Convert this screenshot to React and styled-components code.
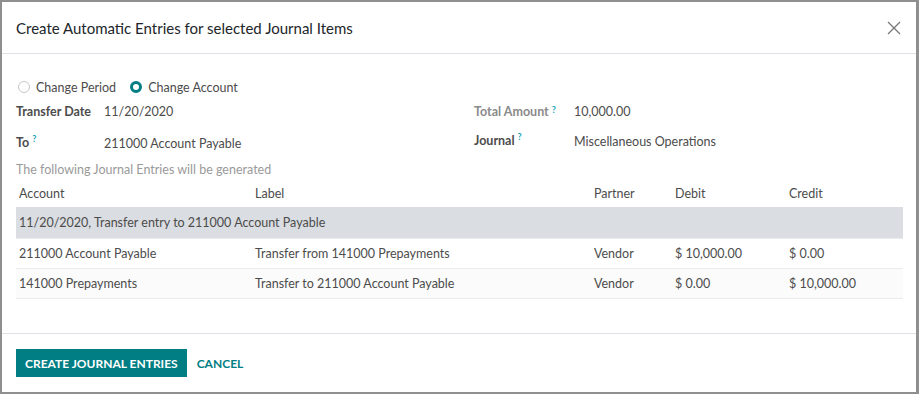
import React from 'react';
import styled, { createGlobalStyle } from 'styled-components';

const Global = createGlobalStyle`
  html, body {
    margin: 0;
    padding: 0;
    background: #fff;
  }
  body {
    font-family: Lato, "Noto Sans", sans-serif;
    font-size: 12.5px;
    color: #4c4c4c;
  }
`;

const Dialog = styled.div`
  box-sizing: border-box;
  width: 919px;
  height: 394px;
  border: 2px solid #8f8f8f;
  border-right-width: 3px;
  display: flex;
  flex-direction: column;
  background: #fff;
`;

const Header = styled.div`
  height: 51px;
  display: flex;
  align-items: center;
  justify-content: space-between;
  padding: 0 12px 0 14px;
  border-bottom: 1px solid #dee2e6;
`;

const Title = styled.h4`
  margin: 0;
  font-size: 15px;
  font-weight: 400;
  color: #212529;
`;

const Close = styled.button`
  border: 0;
  background: none;
  padding: 0;
  width: 20px;
  height: 20px;
  display: flex;
  align-items: center;
  justify-content: center;
  cursor: pointer;
`;

const Body = styled.div`
  flex: 1;
  padding: 22px 14px 0 14px;
  border-bottom: 1px solid #dee2e6;
`;

const Radios = styled.div`
  display: flex;
  gap: 12px;
  height: 22px;
  align-items: center;
`;

const RadioLabel = styled.label`
  display: flex;
  align-items: center;
  gap: 6px;
  color: #4c4c4c;
`;

const Dot = styled.span`
  box-sizing: border-box;
  width: 12px;
  height: 12px;
  border-radius: 50%;
  border: ${(p) => (p.$on ? '3.5px solid #017e84' : '1px solid #c8c8c8')};
  background: #fff;
  margin-left: 2px;
`;

const Fields = styled.div`
  display: grid;
  grid-template-columns: 88px 370px 100px 1fr;
`;

const Label = styled.div`
  display: flex;
  align-items: ${(p) => (p.$top ? 'flex-start' : 'center')};
  height: ${(p) => p.$h}px;
  font-weight: 700;
  color: ${(p) => (p.$muted ? '#8a8a8a' : '#4c4c4c')};
  padding-top: ${(p) => p.$pt || 0}px;
  box-sizing: border-box;
`;

const Value = styled.div`
  display: flex;
  align-items: ${(p) => (p.$top ? 'flex-start' : 'center')};
  height: ${(p) => p.$h}px;
  padding-top: ${(p) => p.$pt || 0}px;
  box-sizing: border-box;
  color: #4c4c4c;
`;

const Help = styled.sup`
  color: #17a2b8;
  font-size: 9px;
  font-weight: 700;
  margin-left: 3px;
  position: relative;
  top: -2px;
`;

const Note = styled.div`
  color: #9a9a9a;
  height: 20px;
  display: flex;
  align-items: center;
`;

const Table = styled.table`
  width: 887px;
  border-collapse: collapse;
  th, td {
    text-align: left;
    padding: 0 0 0 3px;
  }
  th {
    height: 28px;
    font-weight: 400;
    color: #4c4c4c;
  }
`;

const GroupRow = styled.tr`
  background: #dadde1;
  td {
    height: 31px;
  }
`;

const Row = styled.tr`
  background: ${(p) => (p.$alt ? '#fbfbfb' : '#fff')};
  td {
    height: 29px;
    border-top: 1px solid #e9ecef;
    border-bottom: 1px solid #e9ecef;
  }
`;

const Footer = styled.div`
  height: 58px;
  display: flex;
  align-items: center;
  gap: 10px;
  padding: 0 14px;
`;

const Primary = styled.button`
  border: 0;
  background: #017e84;
  color: #fff;
  font-family: inherit;
  font-weight: 700;
  font-size: 12px;
  height: 28px;
  padding: 0 9px;
  text-transform: uppercase;
`;

const Link = styled.button`
  border: 0;
  background: none;
  color: #017e84;
  font-family: inherit;
  font-weight: 700;
  font-size: 12px;
  height: 28px;
  padding: 0;
`;

const lines = [
  { account: '211000 Account Payable', label: 'Transfer from 141000 Prepayments', partner: 'Vendor', debit: '$ 10,000.00', credit: '$ 0.00' },
  { account: '141000 Prepayments', label: 'Transfer to 211000 Account Payable', partner: 'Vendor', debit: '$ 0.00', credit: '$ 10,000.00' },
];

export default function App() {
  return (
    <>
      <Global />
      <Dialog>
        <Header>
          <Title>Create Automatic Entries for selected Journal Items</Title>
          <Close aria-label="Close">
            <svg width="14" height="14" viewBox="0 0 14 14">
              <path d="M1 1L13 13M13 1L1 13" stroke="#777" strokeWidth="1.3" fill="none" />
            </svg>
          </Close>
        </Header>
        <Body>
          <Radios>
            <RadioLabel><Dot />Change Period</RadioLabel>
            <RadioLabel><Dot $on />Change Account</RadioLabel>
          </Radios>
          <Fields>
            <Label $h={27}>Transfer Date</Label>
            <Value $h={27}>11/20/2020</Value>
            <Label $h={27} $muted>Total Amount<Help>?</Help></Label>
            <Value $h={27}>10,000.00</Value>
            <Label $h={34} $top $pt={10}>To<Help>?</Help></Label>
            <Value $h={34} $top $pt={11}>211000 Account Payable</Value>
            <Label $h={34} $top $pt={8}>Journal<Help>?</Help></Label>
            <Value $h={34} $top $pt={9}>Miscellaneous Operations</Value>
          </Fields>
          <Note>The following Journal Entries will be generated</Note>
          <Table>
            <colgroup>
              <col style={{ width: 236 }} />
              <col style={{ width: 339 }} />
              <col style={{ width: 81 }} />
              <col style={{ width: 114 }} />
              <col />
            </colgroup>
            <thead>
              <tr>
                <th>Account</th>
                <th>Label</th>
                <th>Partner</th>
                <th>Debit</th>
                <th>Credit</th>
              </tr>
            </thead>
            <tbody>
              <GroupRow>
                <td colSpan={5}>11/20/2020, Transfer entry to 211000 Account Payable</td>
              </GroupRow>
              {lines.map((l, i) => (
                <Row key={l.account} $alt={i === 1}>
                  <td>{l.account}</td>
                  <td>{l.label}</td>
                  <td>{l.partner}</td>
                  <td>{l.debit}</td>
                  <td>{l.credit}</td>
                </Row>
              ))}
            </tbody>
          </Table>
        </Body>
        <Footer>
          <Primary>Create Journal Entries</Primary>
          <Link>CANCEL</Link>
        </Footer>
      </Dialog>
    </>
  );
}
